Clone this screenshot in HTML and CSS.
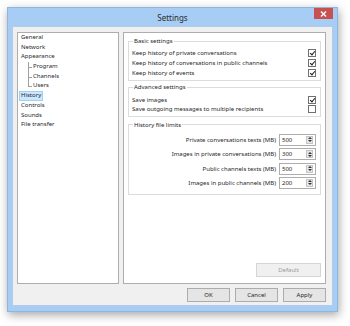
FILE: index.html
```html
<!DOCTYPE html>
<html>
<head>
<meta charset="utf-8">
<link rel="stylesheet" href="styles.css">
</head>
<body>
<div class="window">
  <div class="titlebar">
    <span class="title">Settings</span>
    <div class="close"><svg width="7" height="6" viewBox="0 0 7 6"><path d="M1 0.5 L6 5.5 M6 0.5 L1 5.5" stroke="#fff" stroke-width="1.4"/></svg></div>
  </div>
  <div class="client">
    <div class="panes">
      <div class="tree">
        <div class="item">General</div>
        <div class="item">Network</div>
        <div class="item">Appearance</div>
        <div class="children">
          <div class="item child">Program</div>
          <div class="item child">Channels</div>
          <div class="item child last">Users</div>
        </div>
        <div class="item"><span class="selected">History</span></div>
        <div class="item">Controls</div>
        <div class="item">Sounds</div>
        <div class="item">File transfer</div>
      </div>
      <div class="page">
        <fieldset class="group basic">
          <legend>Basic settings</legend>
          <div class="crow"><span>Keep history of private conversations</span><span class="cb on"></span></div>
          <div class="crow"><span>Keep history of conversations in public channels</span><span class="cb on"></span></div>
          <div class="crow"><span>Keep history of events</span><span class="cb on"></span></div>
        </fieldset>
        <fieldset class="group adv">
          <legend>Advanced settings</legend>
          <div class="crow"><span>Save images</span><span class="cb on"></span></div>
          <div class="crow"><span>Save outgoing messages to multiple recipients</span><span class="cb"></span></div>
        </fieldset>
        <fieldset class="group limits">
          <legend>History file limits</legend>
          <div class="srow"><span class="lbl">Private conversations texts (MB)</span><span class="spin"><span class="val">500</span><span class="arr"><i class="up"></i><i class="dn"></i></span></span></div>
          <div class="srow"><span class="lbl">Images in private conversations (MB)</span><span class="spin"><span class="val">300</span><span class="arr"><i class="up"></i><i class="dn"></i></span></span></div>
          <div class="srow"><span class="lbl">Public channels texts (MB)</span><span class="spin"><span class="val">500</span><span class="arr"><i class="up"></i><i class="dn"></i></span></span></div>
          <div class="srow"><span class="lbl">Images in public channels (MB)</span><span class="spin"><span class="val">200</span><span class="arr"><i class="up"></i><i class="dn"></i></span></span></div>
        </fieldset>
        <div class="default-row"><div class="btn disabled">Default</div></div>
      </div>
    </div>
    <div class="buttons">
      <div class="btn">OK</div>
      <div class="btn">Cancel</div>
      <div class="btn">Apply</div>
    </div>
  </div>
</div>
</body>
</html>
```
FILE: styles.css
```css
* { box-sizing: border-box; }
html, body { margin: 0; padding: 0; background: #fff; }
body {
  font-family: "Noto Sans", "Open Sans", sans-serif;
  font-size: 6px;
  color: #1f1f1f;
  width: 350px;
  height: 326px;
  overflow: hidden;
}
.window {
  margin: 7px 0 0 7px;
  width: 331px;
  height: 305px;
  background: #a8cdf5;
  border: 1px solid #8fb6e0;
  box-shadow: 1px 3px 9px rgba(0,0,0,0.35);
  display: flex;
  flex-direction: column;
  padding: 0 4px 5px 4px;
}
.titlebar {
  height: 18px;
  flex: none;
  position: relative;
  display: flex;
  align-items: center;
  justify-content: center;
}
.title {
  font-size: 8px;
  color: #2b2b2b;
  margin-top: 1px;
}
.close {
  position: absolute;
  right: 0;
  top: 0;
  width: 19px;
  height: 11px;
  background: #c75050;
  display: flex;
  align-items: center;
  justify-content: center;
}
.client {
  flex: 1;
  background: #f0f0f0;
  display: flex;
  flex-direction: column;
  padding: 5px 6px 3px 4px;
  border: 1px solid #b4cbe6;
}
.panes {
  flex: 1;
  display: flex;
  gap: 4px;
}
.tree {
  width: 102px;
  background: #fff;
  border: 1px solid #adadad;
  padding: 0 0 0 3px;
}
.item {
  height: 9.7px;
  line-height: 9.7px;
  white-space: nowrap;
}
.children {
  position: relative;
  margin-left: 7px;
}
.children::before {
  content: "";
  position: absolute;
  left: 0;
  top: 0;
  height: 24.5px;
  border-left: 1px solid #a0a0a0;
}
.child {
  padding-left: 5px;
  position: relative;
}
.child::before {
  content: "";
  position: absolute;
  left: 0;
  top: 5px;
  width: 4px;
  border-top: 1px solid #a0a0a0;
}
.selected {
  display: inline-block;
  background: #cce8ff;
  border: 1px solid #99d1ff;
  margin-left: -2px;
  padding: 0 1px;
  line-height: 7.7px;
}
.page {
  flex: 1;
  background: #fff;
  border: 1px solid #adadad;
  display: flex;
  flex-direction: column;
  padding: 4px 4px 6px 4px;
}
.group {
  margin: 0;
  border: 1px solid #dcdcdc;
  padding: 3px 4px 2px 3px;
}
.group legend {
  padding: 0 1px;
  margin-left: 1px;
  line-height: 8px;
  font-size: 6px;
}
.adv { margin-top: 2px; padding-top: 4px; }
.limits { margin-top: 4px; padding-top: 4px; padding-bottom: 4px; }
.adv .crow { height: 9.4px; }
.crow {
  height: 10px;
  display: flex;
  align-items: center;
  justify-content: space-between;
  white-space: nowrap;
}
.cb {
  width: 8px;
  height: 8px;
  border: 1px solid #707070;
  background: #fff;
  position: relative;
}
.cb.on::after {
  content: "";
  position: absolute;
  left: 1.5px;
  top: 0px;
  width: 2px;
  height: 4px;
  border-right: 1.6px solid #1a1a1a;
  border-bottom: 1.6px solid #1a1a1a;
  transform: rotate(40deg);
}
.srow {
  height: 14.3px;
  display: flex;
  align-items: center;
  justify-content: flex-end;
  white-space: nowrap;
}
.lbl { margin-right: 3px; }
.spin {
  width: 37px;
  height: 12px;
  border: 1px solid #adadad;
  background: #fff;
  display: flex;
  align-items: center;
  justify-content: space-between;
  padding-left: 2px;
}
.arr {
  width: 7px;
  height: 8px;
  margin-right: 2px;
  background: #e6e6e6;
  border: 1px solid #c4c4c4;
  display: flex;
  flex-direction: column;
  align-items: center;
  justify-content: space-around;
}
.arr i {
  width: 0;
  height: 0;
  border-left: 2px solid transparent;
  border-right: 2px solid transparent;
}
.arr .up { border-bottom: 2px solid #333; }
.arr .dn { border-top: 2px solid #333; }
.default-row {
  margin-top: auto;
  display: flex;
  justify-content: flex-end;
}
.btn {
  width: 43px;
  height: 14px;
  border: 1px solid #acacac;
  background: #e5e5e5;
  display: flex;
  align-items: center;
  justify-content: center;
  font-size: 6px;
}
.btn.disabled {
  width: 65px;
  color: #9a9a9a;
  border-color: #d5d5d5;
  background: #f0f0f0;
}
.buttons {
  display: flex;
  justify-content: flex-end;
  gap: 5px;
  margin-top: 4px;
  flex: none;
}
```
